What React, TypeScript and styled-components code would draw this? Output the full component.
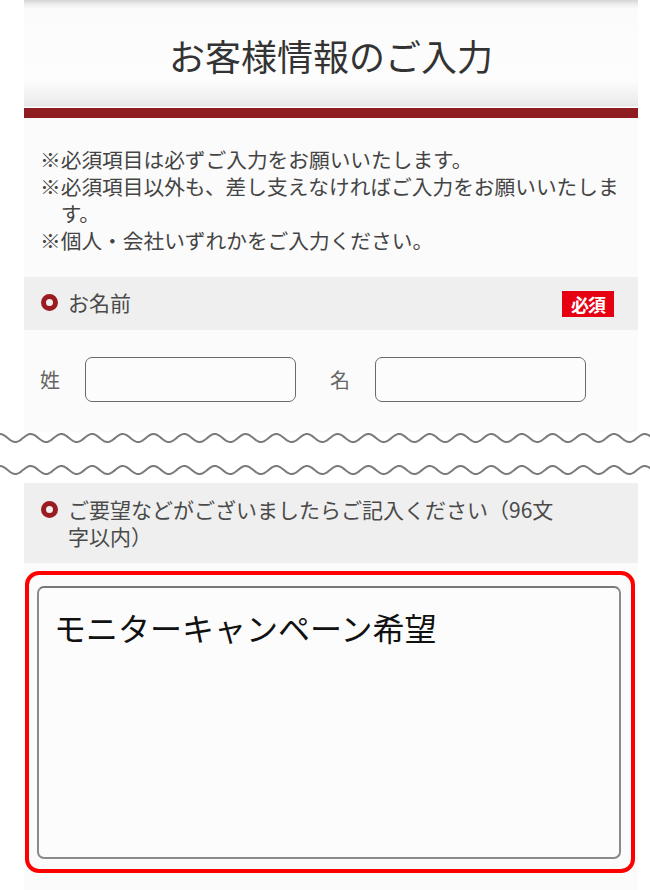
import React from 'react';
import styled, { createGlobalStyle } from 'styled-components';

const GlobalStyle = createGlobalStyle`
  html, body {
    margin: 0;
    padding: 0;
    background: #ffffff;
  }
  body {
    font-family: 'Noto Sans CJK JP', 'Noto Sans', sans-serif;
    color: #444;
  }
  * {
    box-sizing: border-box;
  }
`;

// Layout
const Page = styled.div`
  width: 650px;
  height: 890px;
  overflow: hidden;
`;

const Panel = styled.div`
  margin: 0 12px 0 24px;
  background: #fbfbfb;
`;

// Title block
const TitleBar = styled.div`
  height: 108px;
  display: flex;
  align-items: center;
  justify-content: center;
  padding-top: 2px;
  background:
    linear-gradient(
      to bottom,
      #d4d4d4 0px,
      #ececec 4px,
      #fbfbfb 9px,
      #fdfdfd 80px,
      #eeeeee 101px,
      #e6e6e6 106px,
      #ffffff 107px
    );
`;

const Title = styled.h1`
  margin: 0;
  font-size: 36px;
  font-weight: 400;
  color: #333;
  letter-spacing: 0;
`;

const RedBar = styled.div`
  height: 10px;
  background: #8e1c21;
`;

// Notes
const Notes = styled.div`
  padding: 28px 14px 23px 16px;
`;

const Note = styled.p`
  margin: 0;
  font-size: 20.7px;
  line-height: 27px;
  color: #444;
  padding-left: 1em;
  text-indent: -1em;
`;

// Section heading
const Heading = styled.div<{ $tall?: boolean }>`
  display: flex;
  align-items: flex-start;
  padding: ${p => (p.$tall ? '13px 24px 13px 17px' : '12px 24px 13px 17px')};
  background: #efefef;
`;

const Ring = styled.span`
  flex: none;
  width: 17px;
  height: 17px;
  margin: 5px 10px 0 0;
  border: 5px solid #9a1c21;
  border-radius: 50%;
`;

const HeadingText = styled.div`
  flex: 1;
  font-size: 21px;
  line-height: 27px;
  color: #4a4a4a;
`;

const BadgeSlot = styled.div`
  flex: none;
  width: 52px;
  margin-left: 2px;
  padding-top: 2px;
`;

const Badge = styled.span`
  display: block;
  height: 26px;
  background: #e60012;
  color: #fff;
  font-size: 18px;
  font-weight: 700;
  line-height: 26px;
  text-align: center;
  letter-spacing: -1px;
`;

// Name row
const NameRow = styled.div`
  display: flex;
  align-items: center;
  padding: 27px 0 30px 16px;
`;

const FieldLabel = styled.span`
  width: 20px;
  font-size: 20px;
  color: #666;
  margin-right: 25px;
`;

const TextInput = styled.input<{ $gapAfter?: number }>`
  width: 211px;
  height: 45px;
  border: 1.5px solid #6a6a6a;
  border-radius: 7px;
  background: #fcfcfc;
  margin-right: ${p => p.$gapAfter ?? 0}px;
  font-family: inherit;
  font-size: 20px;
  padding: 0 10px;
  outline: none;
`;

// Wavy break
const WaveBreak = styled.div`
  height: 51px;
  background: #ffffff;
  svg {
    display: block;
  }
`;

const wavePath = (cy: number) => {
  const period = 30.7;
  const amp = 4;
  let d = '';
  for (let x = 0; x <= 652; x += 1) {
    const y = cy - amp * Math.cos((2 * Math.PI * x) / period);
    d += `${x === 0 ? 'M' : 'L'}${x},${y.toFixed(2)} `;
  }
  return d;
};

// Request box
const RequestArea = styled.div`
  padding: 8px 3px 17px 1px;
`;

const Highlight = styled.div`
  border: 4px solid #ff0000;
  border-radius: 14px;
  padding: 11px 10px 10px 8px;
`;

const TextArea = styled.textarea`
  display: block;
  width: 100%;
  height: 273px;
  resize: none;
  border: 2px solid #8a8a8a;
  border-top-color: #777;
  border-radius: 7px;
  background: #fcfcfc;
  padding: 19px 15px;
  font-family: 'Noto Sans CJK JP', 'Noto Sans', sans-serif;
  font-size: 32px;
  line-height: 40px;
  color: #111;
  outline: none;
`;

const App: React.FC = () => {
  return (
    <Page>
      <GlobalStyle />
      <Panel>
        <TitleBar>
          <Title>お客様情報のご入力</Title>
        </TitleBar>
        <RedBar />
        <Notes>
          <Note>※必須項目は必ずご入力をお願いいたします。</Note>
          <Note>※必須項目以外も、差し支えなければご入力をお願いいたします。</Note>
          <Note>※個人・会社いずれかをご入力ください。</Note>
        </Notes>
        <Heading>
          <Ring />
          <HeadingText>お名前</HeadingText>
          <BadgeSlot>
            <Badge>必須</Badge>
          </BadgeSlot>
        </Heading>
        <NameRow>
          <FieldLabel>姓</FieldLabel>
          <TextInput $gapAfter={34} />
          <FieldLabel>名</FieldLabel>
          <TextInput />
        </NameRow>
      </Panel>

      <WaveBreak>
        <svg width="650" height="51" viewBox="0 0 650 51">
          <path d={wavePath(6)} fill="none" stroke="#7a7a7a" strokeWidth="2" />
          <path d={wavePath(38)} fill="none" stroke="#7a7a7a" strokeWidth="2" />
        </svg>
      </WaveBreak>

      <Panel>
        <Heading $tall>
          <Ring />
          <HeadingText>ご要望などがございましたらご記入ください（96文字以内）</HeadingText>
          <BadgeSlot />
        </Heading>
        <RequestArea>
          <Highlight>
            <TextArea defaultValue="モニターキャンペーン希望" />
          </Highlight>
        </RequestArea>
      </Panel>
    </Page>
  );
};

export default App;
